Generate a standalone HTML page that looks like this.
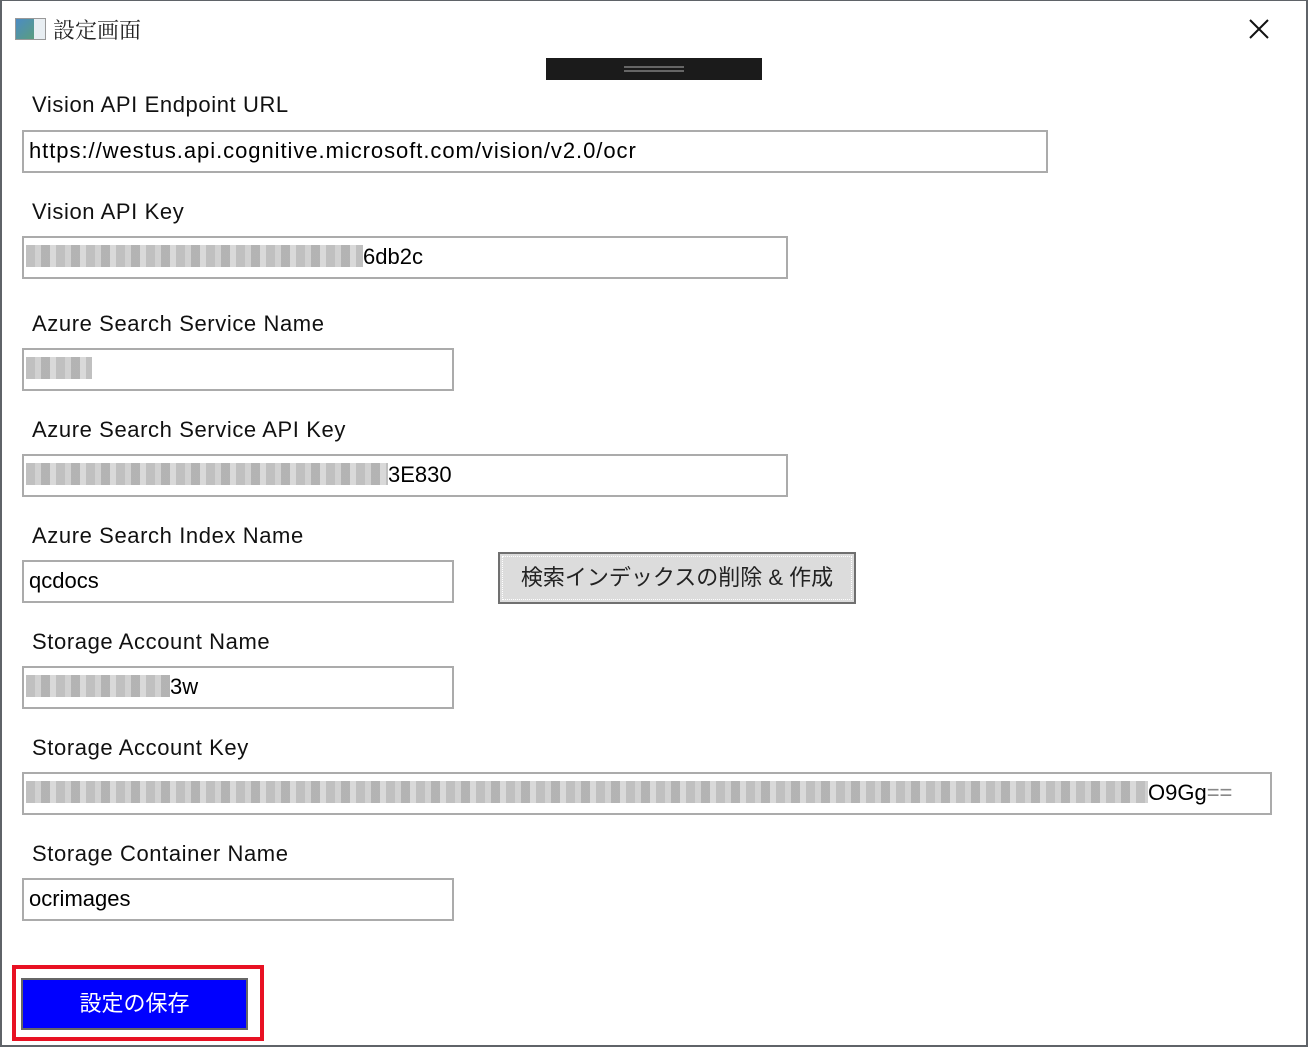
<!DOCTYPE html>
<html><head><meta charset="utf-8"><style>
*{margin:0;padding:0;box-sizing:border-box}
html,body{width:1308px;height:1047px;overflow:hidden;background:#fff}
body{position:relative;font-family:"Liberation Sans","Noto Sans CJK JP",sans-serif;color:#000}
.win{position:absolute;left:0;top:0;width:1308px;height:1047px;border-top:1px solid #5f6368;border-left:2px solid #5f6368;border-right:2px solid #5f6368;border-bottom:2px solid #5f6368}
.a{position:absolute}
.lbl{position:absolute;left:32px;font-size:22px;line-height:26px;color:#111;letter-spacing:0.6px}
.in{position:absolute;left:22px;height:43px;border:2px solid #ababab;background:#fff;font-size:22px;line-height:38px;padding-left:5px;white-space:nowrap;overflow:hidden}
.bl{display:inline-block;vertical-align:middle;height:22px;margin-top:-4px;background:repeating-linear-gradient(90deg,#b5b5b5 0 9px,#c9c9c9 9px 15px,#a6a6a6 15px 24px,#d2d2d2 24px 30px);opacity:.85}
</style></head><body>
<div class="win"></div>
<div class="a" style="left:15px;top:18px;width:31px;height:22px;border:1px solid #999;background:linear-gradient(135deg,#4b8bc4,#5fa36a)"></div>
<div class="a" style="left:34px;top:19px;width:11px;height:20px;background:#e8eef2"></div>
<div class="a" style="left:53px;top:16px;font-size:22px;line-height:28px;color:#222;font-family:'Noto Serif CJK SC',serif">設定画面</div>
<svg class="a" style="left:1248px;top:18px" width="22" height="22"><path d="M2 2L20 20M20 2L2 20" stroke="#111" stroke-width="2"/></svg>
<div class="a" style="left:546px;top:58px;width:216px;height:22px;background:#1b1b1b"></div>
<div class="a" style="left:624px;top:66px;width:60px;height:2px;background:#666"></div>
<div class="a" style="left:624px;top:70px;width:60px;height:2px;background:#666"></div>

<div class="lbl" style="top:92px">Vision API Endpoint URL</div>
<div class="in" style="top:130px;width:1026px;letter-spacing:0.95px">https://westus.api.cognitive.microsoft.com/vision/v2.0/ocr</div>
<div class="lbl" style="top:199px">Vision API Key</div>
<div class="in" style="top:236px;width:766px;padding-left:2px"><span class="bl" style="width:337px"></span>6db2c</div>
<div class="lbl" style="top:311px">Azure Search Service Name</div>
<div class="in" style="top:348px;width:432px;padding-left:2px"><span class="bl" style="width:66px"></span></div>
<div class="lbl" style="top:417px">Azure Search Service API Key</div>
<div class="in" style="top:454px;width:766px;padding-left:2px"><span class="bl" style="width:362px"></span>3E830</div>
<div class="lbl" style="top:523px">Azure Search Index Name</div>
<div class="in" style="top:560px;width:432px">qcdocs</div>
<div class="a" style="left:498px;top:552px;width:358px;height:52px;background:#dcdcdc;border:2px solid #707070"></div>
<div class="a" style="left:502px;top:556px;width:350px;height:44px;border:1px dotted #fff"></div>
<div class="a" style="left:498px;top:564px;width:358px;text-align:center;font-size:22px;line-height:28px;color:#222">検索インデックスの削除 &amp; 作成</div>
<div class="lbl" style="top:629px">Storage Account Name</div>
<div class="in" style="top:666px;width:432px;padding-left:2px"><span class="bl" style="width:144px"></span>3w</div>
<div class="lbl" style="top:735px">Storage Account Key</div>
<div class="in" style="top:772px;width:1250px;padding-left:2px"><span class="bl" style="width:1122px"></span>O9Gg<span style="color:#888">==</span></div>
<div class="lbl" style="top:841px">Storage Container Name</div>
<div class="in" style="top:878px;width:432px">ocrimages</div>

<div class="a" style="left:12px;top:965px;width:252px;height:76px;border:4px solid #e81123"></div>
<div class="a" style="left:21px;top:978px;width:227px;height:52px;background:#0000ff;border:2px solid #666;color:#fff;font-size:22px;line-height:48px;text-align:center">設定の保存</div>
</body></html>
